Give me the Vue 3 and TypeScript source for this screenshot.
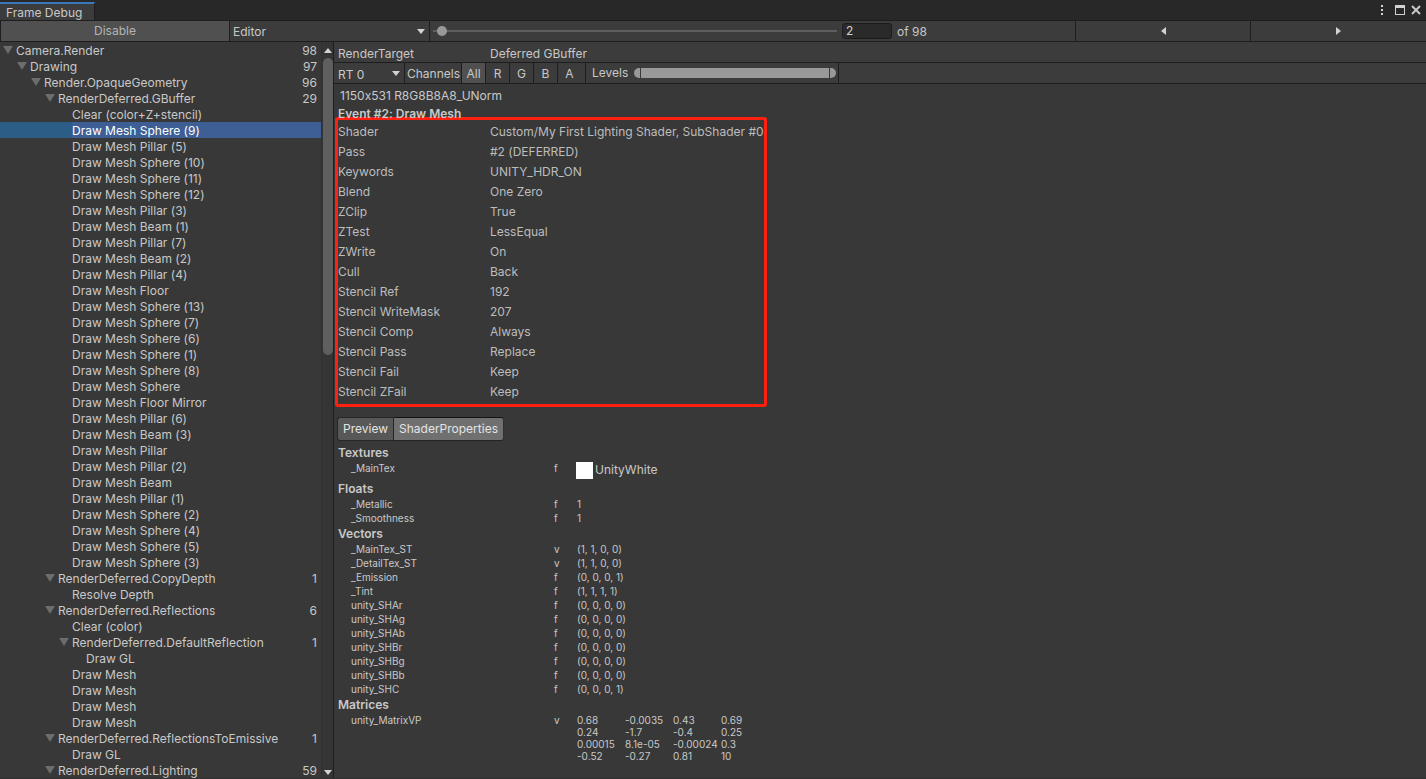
<script setup lang="ts">
import { ref } from 'vue'

interface TreeRow {
  label: string
  depth: number
  count?: number
}

interface ShaderProp {
  name: string
  stage: string
  value: string
}

const leaf = (label: string, depth = 4): TreeRow => ({ label, depth })

const meshes: string[] = [
  'Sphere (9)', 'Pillar (5)', 'Sphere (10)', 'Sphere (11)', 'Sphere (12)', 'Pillar (3)', 'Beam (1)',
  'Pillar (7)', 'Beam (2)', 'Pillar (4)', 'Floor', 'Sphere (13)', 'Sphere (7)', 'Sphere (6)',
  'Sphere (1)', 'Sphere (8)', 'Sphere', 'Floor Mirror', 'Pillar (6)', 'Beam (3)', 'Pillar',
  'Pillar (2)', 'Beam', 'Pillar (1)', 'Sphere (2)', 'Sphere (4)', 'Sphere (5)', 'Sphere (3)',
]

const rows: TreeRow[] = [
  { label: 'Camera.Render', depth: 0, count: 98 },
  { label: 'Drawing', depth: 1, count: 97 },
  { label: 'Render.OpaqueGeometry', depth: 2, count: 96 },
  { label: 'RenderDeferred.GBuffer', depth: 3, count: 29 },
  leaf('Clear (color+Z+stencil)'),
  ...meshes.map((m) => leaf('Draw Mesh ' + m)),
  { label: 'RenderDeferred.CopyDepth', depth: 3, count: 1 },
  leaf('Resolve Depth'),
  { label: 'RenderDeferred.Reflections', depth: 3, count: 6 },
  leaf('Clear (color)'),
  { label: 'RenderDeferred.DefaultReflection', depth: 4, count: 1 },
  leaf('Draw GL', 5),
  leaf('Draw Mesh'),
  leaf('Draw Mesh'),
  leaf('Draw Mesh'),
  leaf('Draw Mesh'),
  { label: 'RenderDeferred.ReflectionsToEmissive', depth: 3, count: 1 },
  leaf('Draw GL'),
  { label: 'RenderDeferred.Lighting', depth: 3, count: 59 },
]

const details: [string, string][] = [
  ['Shader', 'Custom/My First Lighting Shader, SubShader #0'],
  ['Pass', '#2 (DEFERRED)'],
  ['Keywords', 'UNITY_HDR_ON'],
  ['Blend', 'One Zero'],
  ['ZClip', 'True'],
  ['ZTest', 'LessEqual'],
  ['ZWrite', 'On'],
  ['Cull', 'Back'],
  ['Stencil Ref', '192'],
  ['Stencil WriteMask', '207'],
  ['Stencil Comp', 'Always'],
  ['Stencil Pass', 'Replace'],
  ['Stencil Fail', 'Keep'],
  ['Stencil ZFail', 'Keep'],
]

const floats: ShaderProp[] = [
  { name: '_Metallic', stage: 'f', value: '1' },
  { name: '_Smoothness', stage: 'f', value: '1' },
]

const vectors: ShaderProp[] = [
  { name: '_MainTex_ST', stage: 'v', value: '(1, 1, 0, 0)' },
  { name: '_DetailTex_ST', stage: 'v', value: '(1, 1, 0, 0)' },
  { name: '_Emission', stage: 'f', value: '(0, 0, 0, 1)' },
  { name: '_Tint', stage: 'f', value: '(1, 1, 1, 1)' },
  { name: 'unity_SHAr', stage: 'f', value: '(0, 0, 0, 0)' },
  { name: 'unity_SHAg', stage: 'f', value: '(0, 0, 0, 0)' },
  { name: 'unity_SHAb', stage: 'f', value: '(0, 0, 0, 0)' },
  { name: 'unity_SHBr', stage: 'f', value: '(0, 0, 0, 0)' },
  { name: 'unity_SHBg', stage: 'f', value: '(0, 0, 0, 0)' },
  { name: 'unity_SHBb', stage: 'f', value: '(0, 0, 0, 0)' },
  { name: 'unity_SHC', stage: 'f', value: '(0, 0, 0, 1)' },
]

const matrix: string[] = [
  '0.68', '-0.0035', '0.43', '0.69',
  '0.24', '-1.7', '-0.4', '0.25',
  '0.00015', '8.1e-05', '-0.00024', '0.3',
  '-0.52', '-0.27', '0.81', '10',
]

const selected = ref(5)
const eventIndex = ref(2)
const channels: string[] = ['All', 'R', 'G', 'B', 'A']
const channel = ref('All')
const tabs: string[] = ['Preview', 'ShaderProperties']
const tab = ref('ShaderProperties')
const levelMin = ref(0)
const levelMax = ref(100)

function step(delta: number): void {
  eventIndex.value = Math.min(98, Math.max(1, eventIndex.value + delta))
}
</script>

<template>
  <div class="window">
    <header class="titlebar">
      <h1 class="window-tab">Frame Debug</h1>
      <div class="window-actions">
        <button type="button" aria-label="Menu">
          <svg width="4" height="12" viewBox="0 0 4 12"><path d="M1 1h2v2H1zM1 5h2v2H1zM1 9h2v2H1z" /></svg>
        </button>
        <button type="button" aria-label="Maximize">
          <svg width="10" height="10" viewBox="0 0 10 10"><path fill-rule="evenodd" d="M0 0h10v10H0zM1 3v6h8V3z" /></svg>
        </button>
        <button type="button" aria-label="Close">
          <svg width="10" height="10" viewBox="0 0 10 10"><path class="stroke" d="M1 1l8 8M9 1L1 9" /></svg>
        </button>
      </div>
    </header>

    <div class="toolbar">
      <button type="button" class="disable">Disable</button>
      <div class="dropdown player">
        <select aria-label="Connected player"><option>Editor</option></select>
        <svg width="8" height="5" viewBox="0 0 8 5"><path d="M0 0h8L4 5z" /></svg>
      </div>
      <input v-model.number="eventIndex" class="event-slider" type="range" min="1" max="98" aria-label="Event" />
      <input v-model.number="eventIndex" class="event-field" type="text" aria-label="Event number" />
      <span class="total">of 98</span>
      <button type="button" class="step" aria-label="Previous event" @click="step(-1)">
        <svg width="5" height="8" viewBox="0 0 5 8"><path d="M5 0v8L0 4z" /></svg>
      </button>
      <button type="button" class="step" aria-label="Next event" @click="step(1)">
        <svg width="5" height="8" viewBox="0 0 5 8"><path d="M0 0v8l5-4z" /></svg>
      </button>
    </div>

    <div class="body">
      <nav class="tree-pane" aria-label="Events">
        <ul class="tree">
          <li
            v-for="(row, i) in rows"
            :key="i"
            :class="['row', 'depth-' + row.depth, { selected: i === selected }]"
            @click="selected = i"
          >
            <span class="indent">
              <button v-if="row.count !== undefined" type="button" class="fold" :aria-label="'Collapse ' + row.label">
                <svg width="10" height="8" viewBox="0 0 10 8"><path d="M0 0h10L5 8z" /></svg>
              </button>
            </span>
            <span class="row-body">
              <span>{{ row.label }}</span>
              <span>{{ row.count }}</span>
            </span>
          </li>
        </ul>
        <div class="scrollbar">
          <svg width="8" height="5" viewBox="0 0 8 5"><path d="M0 5h8L4 0z" /></svg>
          <div class="track"><div class="thumb"></div></div>
          <svg width="8" height="5" viewBox="0 0 8 5"><path d="M0 0h8L4 5z" /></svg>
        </div>
      </nav>

      <main class="inspector">
        <div class="target pair">
          <span>RenderTarget</span>
          <span>Deferred GBuffer</span>
        </div>
        <div class="rt-bar">
          <div class="dropdown rt">
            <select aria-label="Render target"><option>RT 0</option></select>
            <svg width="8" height="5" viewBox="0 0 8 5"><path d="M0 0h8L4 5z" /></svg>
          </div>
          <span class="channels-label">Channels</span>
          <button
            v-for="c in channels"
            :key="c"
            type="button"
            :class="['channel', { on: c === channel }]"
            @click="channel = c"
          >{{ c }}</button>
          <div class="levels">
            <span>Levels</span>
            <div class="level-bar">
              <input v-model.number="levelMin" type="range" aria-label="Minimum level" />
              <input v-model.number="levelMax" type="range" aria-label="Maximum level" />
            </div>
          </div>
        </div>

        <p class="format">1150x531 R8G8B8A8_UNorm</p>
        <h2 class="event-title">Event #2: Draw Mesh</h2>

        <dl class="details">
          <div v-for="[k, v] in details" :key="k" class="pair">
            <dt>{{ k }}</dt>
            <dd>{{ v }}</dd>
          </div>
        </dl>

        <div class="tabs">
          <button
            v-for="t in tabs"
            :key="t"
            type="button"
            :class="{ on: t === tab }"
            @click="tab = t"
          >{{ t }}</button>
        </div>

        <section>
          <h3>Textures</h3>
          <table>
            <tbody>
              <tr class="texture-row">
                <th scope="row">_MainTex</th>
                <td class="stage">f</td>
                <td><span class="texture"><i></i>UnityWhite</span></td>
              </tr>
            </tbody>
          </table>
        </section>
        <section>
          <h3>Floats</h3>
          <table>
            <tbody>
              <tr v-for="p in floats" :key="p.name">
                <th scope="row">{{ p.name }}</th>
                <td class="stage">{{ p.stage }}</td>
                <td>{{ p.value }}</td>
              </tr>
            </tbody>
          </table>
        </section>
        <section>
          <h3>Vectors</h3>
          <table>
            <tbody>
              <tr v-for="p in vectors" :key="p.name">
                <th scope="row">{{ p.name }}</th>
                <td class="stage">{{ p.stage }}</td>
                <td>{{ p.value }}</td>
              </tr>
            </tbody>
          </table>
        </section>
        <section>
          <h3>Matrices</h3>
          <table>
            <tbody>
              <tr>
                <th scope="row">unity_MatrixVP</th>
                <td class="stage">v</td>
                <td>
                  <div class="matrix">
                    <span v-for="(m, i) in matrix" :key="i">{{ m }}</span>
                  </div>
                </td>
              </tr>
            </tbody>
          </table>
        </section>
      </main>
    </div>
  </div>
</template>

<style>
body {
  background: #383838;
}
</style>

<style scoped>
.window {
  display: flex;
  flex-direction: column;
  height: 100vh;
  overflow: hidden;
  box-sizing: border-box;
  border-bottom: 1px solid #303030;
  background: #383838;
  color: #c8c8c8;
  font: 12px/16px Inter, "Liberation Sans", sans-serif;
  font-variant-ligatures: no-contextual;
}

.window *,
.window *::before {
  box-sizing: border-box;
}

h1, h2, h3, p, ul, dl, dd {
  margin: 0;
  padding: 0;
  font-size: 12px;
}

button,
select,
input {
  margin: 0;
  padding: 0;
  border: 0;
  border-radius: 0;
  background: none;
  color: inherit;
  font: inherit;
}

svg {
  display: block;
  flex: none;
  fill: #d2d2d2;
}

.stroke {
  fill: none;
  stroke: #c8c8c8;
  stroke-width: 2;
}

.titlebar {
  display: flex;
  flex: none;
  justify-content: space-between;
  align-items: flex-end;
  height: 21px;
  border-bottom: 1px solid #1e1e1e;
  background: #282828;
}

.window-tab {
  height: 18px;
  padding: 0 12px 0 6px;
  border-top: 2px solid #3a79bb;
  border-right: 1px solid #1e1e1e;
  background: #3c3c3c;
  font-weight: 400;
  line-height: 18px;
}

.window-actions {
  display: flex;
  align-items: center;
  gap: 6px;
  height: 20px;
  padding-right: 5px;
}

.window-actions button:first-child {
  margin-right: 5px;
}

.toolbar {
  display: flex;
  flex: none;
  align-items: center;
  height: 21px;
  padding-right: 1px;
  border-bottom: 1px solid #1e1e1e;
  background: #3c3c3c;
  line-height: 18px;
}

.disable {
  width: 230px;
  height: 20px;
  border: solid #1e1e1e;
  border-width: 0 1px;
  background: #505050;
  color: #b4b4b4;
}

.dropdown {
  display: grid;
  align-items: center;
  height: 20px;
  border-right: 1px solid #1e1e1e;
}

.dropdown > * {
  grid-area: 1 / 1;
}

.dropdown select {
  width: 100%;
  height: 20px;
  padding-top: 1px;
  appearance: none;
  outline: none;
}

.dropdown svg {
  justify-self: end;
  margin-right: 4px;
  pointer-events: none;
}

.player {
  width: 200px;
}

.player select {
  padding-left: 3px;
}

.event-slider {
  width: 404px;
  height: 12px;
  margin-left: 3px;
  padding: 0;
  appearance: none;
  background: linear-gradient(#5e5e5e, #5e5e5e) center / 100% 2px no-repeat;
}

.event-slider::-webkit-slider-thumb {
  width: 10px;
  height: 10px;
  border-radius: 50%;
  appearance: none;
  background: #999999;
}

.event-field {
  width: 50px;
  height: 16px;
  margin: 0 5px;
  padding: 0 3px;
  border: 1px solid #1c1c1c;
  border-radius: 3px;
  background: #2a2a2a;
  color: #d2d2d2;
}

.total {
  flex: 1;
  padding-top: 1px;
}

.step {
  display: flex;
  justify-content: center;
  align-items: center;
  width: 175px;
  height: 20px;
  border-left: 1px solid #1e1e1e;
}

.body {
  display: grid;
  flex: 1;
  grid-template-columns: 334px 1fr;
  min-height: 0;
}

.tree-pane {
  display: flex;
  min-height: 0;
  border-right: 1px solid #1e1e1e;
}

.tree {
  flex: 1;
  overflow: hidden;
  list-style: none;
}

.row {
  display: flex;
  height: 16px;
  line-height: 18px;
}

.indent {
  display: flex;
  flex: none;
  justify-content: flex-end;
  align-items: center;
  width: 16px;
  padding-right: 3px;
}

.depth-1 .indent { width: 30px; }
.depth-2 .indent { width: 44px; }
.depth-3 .indent { width: 58px; }
.depth-4 .indent { width: 72px; }
.depth-5 .indent { width: 86px; }

.fold svg {
  fill: #6c6c6c;
}

.row-body {
  display: flex;
  flex: 1;
  justify-content: space-between;
  padding-right: 4px;
}

.selected {
  color: #ffffff;
}

.selected .indent {
  background: #2c5d87;
}

.selected .row-body {
  background: #3e5f96;
}

.scrollbar {
  display: flex;
  flex-direction: column;
  align-items: center;
  width: 12px;
  padding: 6px 0 3px;
  border-left: 1px solid #303030;
  background: #353535;
}

.track {
  flex: 1;
  align-self: stretch;
  padding: 5px 0 5px 1px;
}

.thumb {
  height: 42%;
  border-radius: 5px;
  background: #5f5f5f;
}

.inspector {
  min-width: 0;
  overflow: hidden;
}

.pair {
  display: grid;
  grid-template-columns: 152px 1fr;
  line-height: 20px;
}

.target {
  height: 21px;
  padding: 2px 4px 0;
  border-bottom: 1px solid #1e1e1e;
  background: #3c3c3c;
}

.rt-bar {
  display: flex;
  height: 21px;
  border-bottom: 1px solid #1e1e1e;
  background: #3c3c3c;
  line-height: 22px;
}

.rt {
  width: 71px;
}

.rt select {
  padding-left: 4px;
}

.channels-label {
  width: 57px;
  padding-left: 2px;
  border-right: 1px solid #1e1e1e;
}

.channel {
  width: 24px;
  height: 20px;
  border-right: 1px solid #1e1e1e;
}

.channel:last-of-type {
  width: 28px;
  padding-right: 4px;
}

.channel.on {
  background: #505050;
}

.levels {
  display: flex;
  align-items: center;
  gap: 6px;
  padding: 0 2px 0 6px;
  border-right: 1px solid #1e1e1e;
}

.level-bar {
  display: grid;
  width: 202px;
  height: 10px;
  padding: 0 6px;
  border-radius: 5px;
  background: #999999;
}

.level-bar::before {
  content: "";
  grid-area: 1 / 1;
  border: solid #383838;
  border-width: 0 1px;
}

.level-bar input {
  grid-area: 1 / 1;
  width: 100%;
  height: 10px;
  opacity: 0;
}

.format {
  padding: 4px 6px 0;
}

.event-title {
  padding: 2px 4px 0;
  font-weight: 600;
}

.details {
  width: 432px;
  height: 290px;
  margin: -5px 0 10px 1px;
  padding: 2px 0 0;
  border: 3px solid #ff2010;
  border-radius: 3px;
  color: #bdbdbd;
}

.details dt {
  white-space: nowrap;
}

.tabs {
  display: flex;
  padding: 0 3px 3px;
}

.tabs button {
  height: 24px;
  padding: 0 5px;
  border: 1px solid #262626;
  border-right-width: 0;
  border-radius: 3px 0 0 3px;
  background: #585858;
  color: #e4e4e4;
}

.tabs button:last-child {
  border-right-width: 1px;
  border-radius: 0 3px 3px 0;
}

.tabs button.on {
  border-color: #141414 #303030 #242424 #242424;
  background: #707070;
}

h3 {
  padding: 0 4px;
  font-weight: 600;
  line-height: 17px;
}

table {
  width: 100%;
  border-collapse: collapse;
  table-layout: fixed;
  font-size: 10px;
  line-height: 14px;
}

th,
td {
  padding: 0;
  font-weight: 400;
  text-align: left;
  vertical-align: top;
}

th {
  width: 220px;
  padding-left: 17px;
}

.stage {
  width: 23px;
}

.texture-row {
  height: 19px;
}

.texture {
  display: flex;
  align-items: center;
  gap: 2px;
  margin-left: -1px;
  font-size: 12px;
  line-height: 18px;
}

.texture i {
  width: 17px;
  height: 17px;
  background: #ffffff;
}

.matrix {
  display: grid;
  grid-template-columns: repeat(4, 48px);
  padding-top: 1px;
  line-height: 12px;
}
</style>
